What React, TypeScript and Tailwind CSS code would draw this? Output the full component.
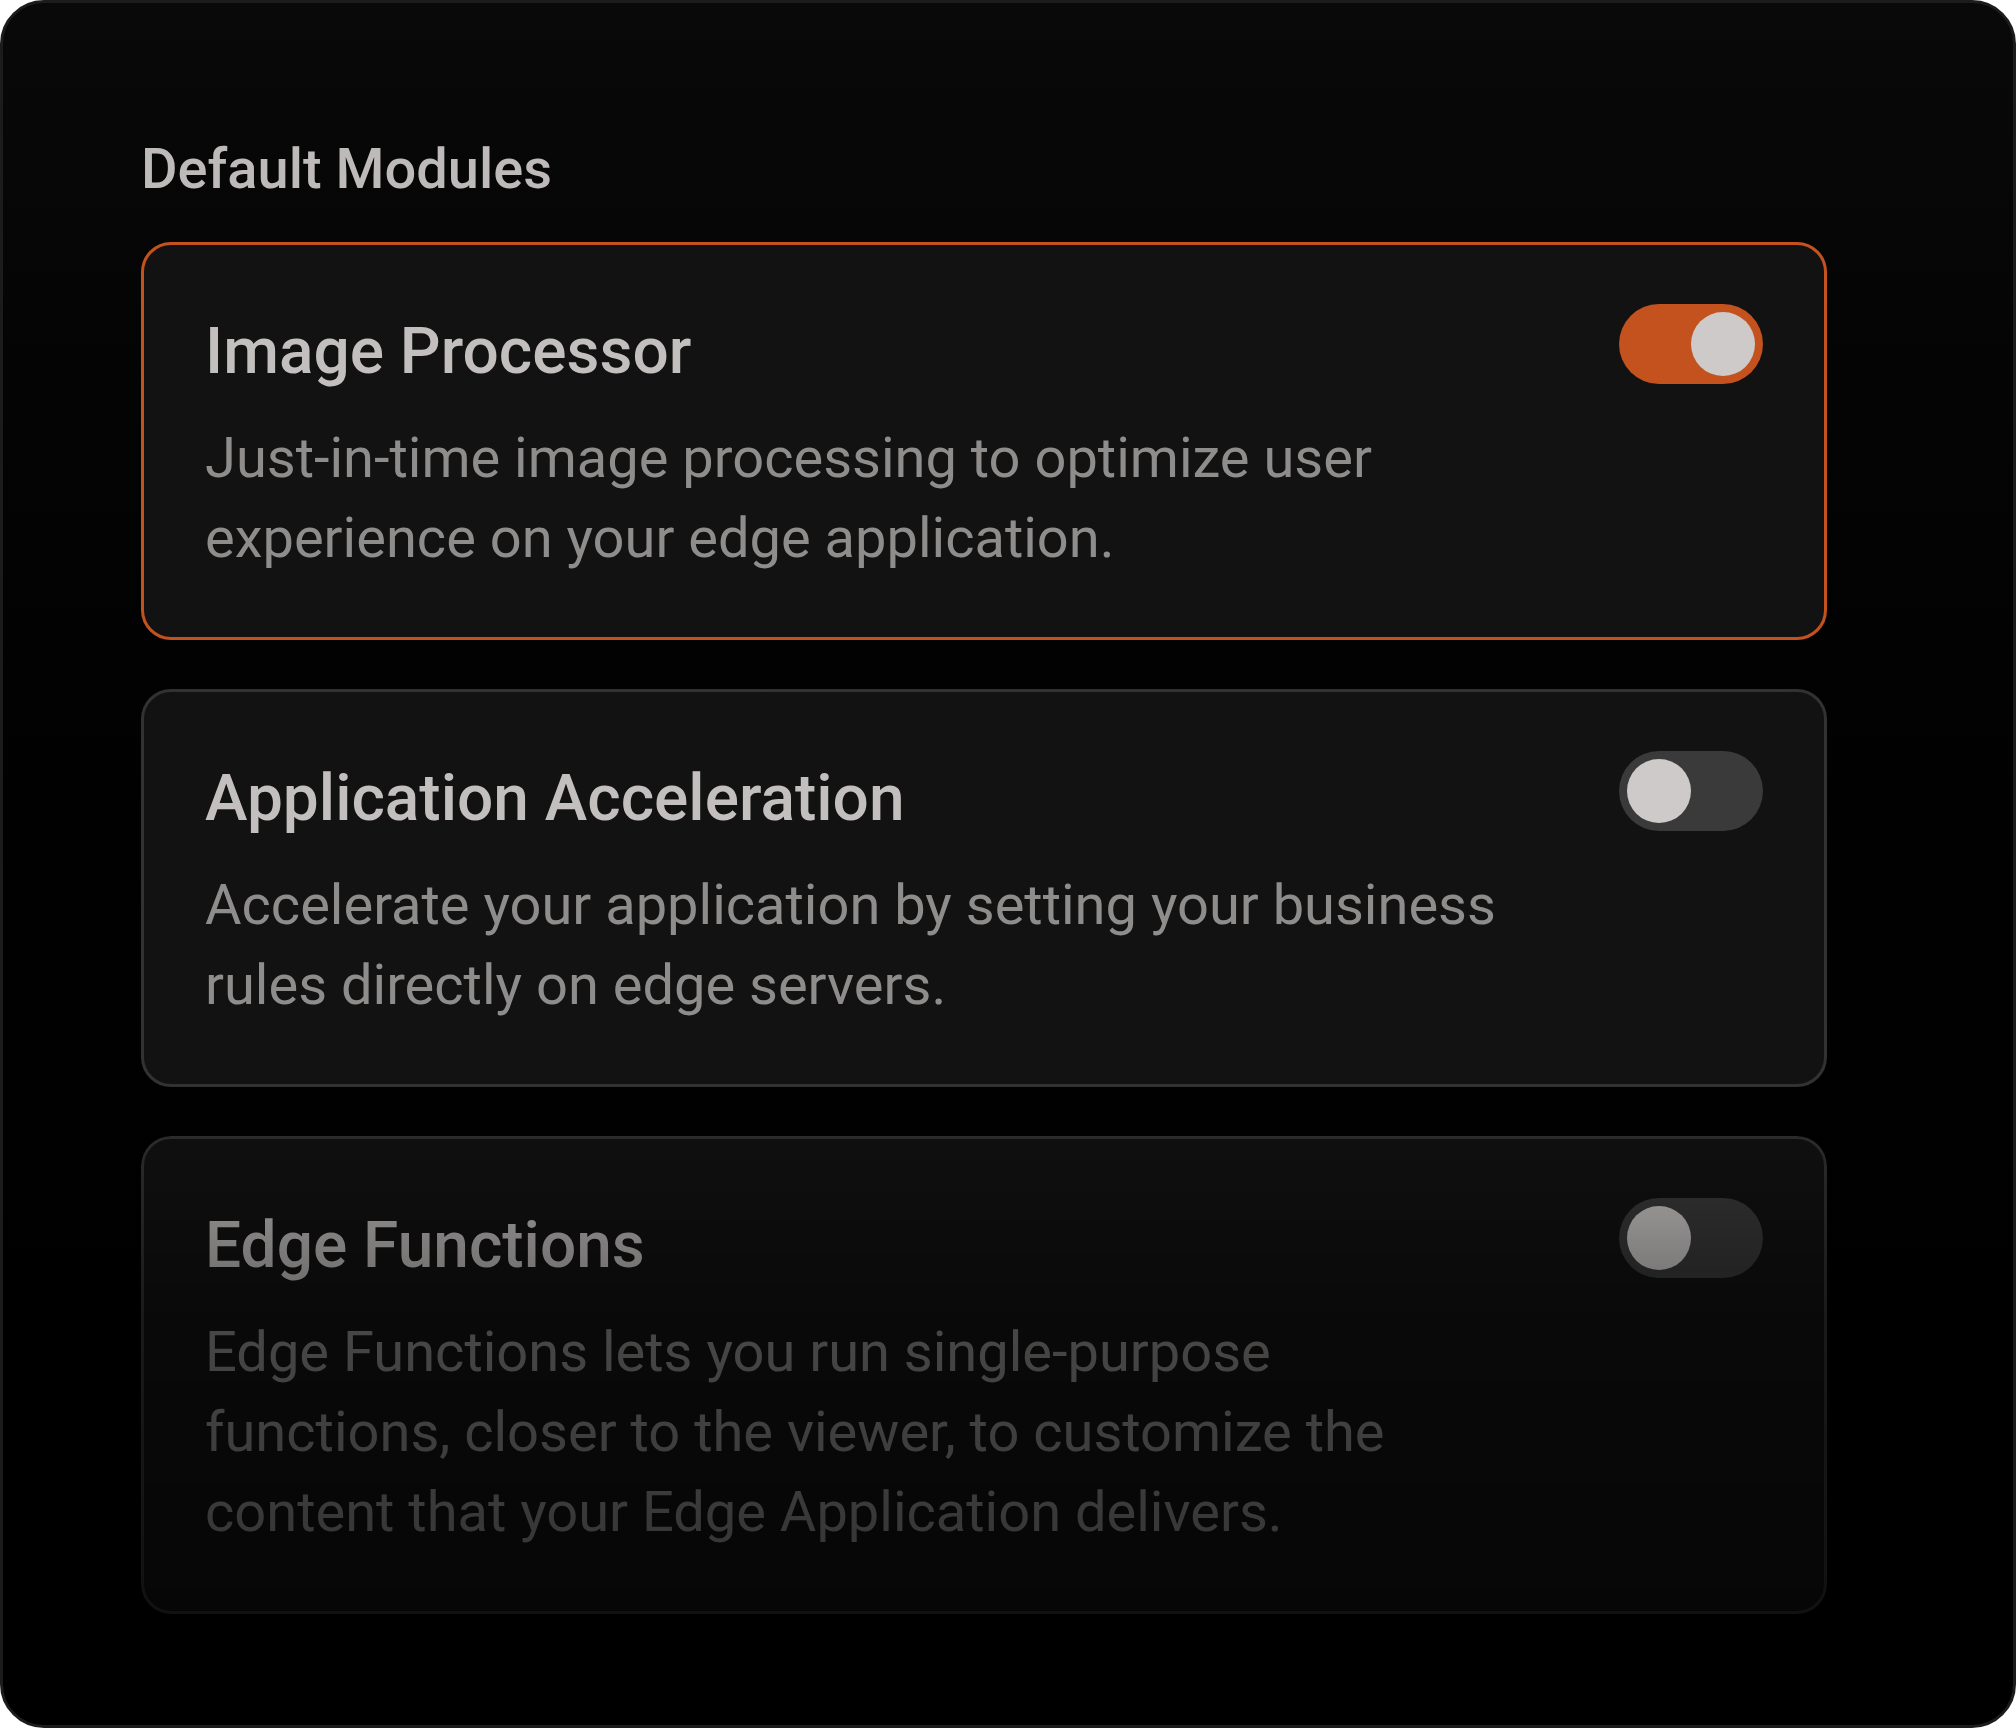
import React from "react";

type Module = {
  title: string;
  description: string;
  enabled: boolean;
  faded?: boolean;
};

const modules: Module[] = [
  {
    title: "Image Processor",
    description: "Just-in-time image processing to optimize user experience on your edge application.",
    enabled: true,
  },
  {
    title: "Application Acceleration",
    description: "Accelerate your application by setting your business rules directly on edge servers.",
    enabled: false,
  },
  {
    title: "Edge Functions",
    description:
      "Edge Functions lets you run single-purpose functions, closer to the viewer, to customize the content that your Edge Application delivers.",
    enabled: false,
    faded: true,
  },
];

function Toggle({ on }: { on: boolean }) {
  return (
    <div
      className={`flex h-[80px] w-[144px] shrink-0 items-center rounded-full p-[8px] ${
        on ? "justify-end bg-[#c4521f]" : "justify-start bg-[#3a3a3a]"
      }`}
    >
      <div className="h-[64px] w-[64px] rounded-full bg-[#cdcac9]" />
    </div>
  );
}

function ModuleCard({ title, description, enabled, faded }: Module) {
  return (
    <div
      className={`flex items-start justify-between rounded-[30px] border-[3px] bg-[#121212] px-[61px] py-[59px] ${
        enabled ? "border-[#c4521f]" : "border-[#323232]"
      } ${
        faded
          ? "[mask-image:linear-gradient(to_bottom,rgba(0,0,0,0.85),rgba(0,0,0,0.5)_40%,rgba(0,0,0,0.35))]"
          : ""
      }`}
    >
      <div className="max-w-[1305px] flex-1">
        <h3 className="text-[64px] font-medium leading-[96px] text-[#c2bfbe]">{title}</h3>
        <p className="mt-[18px] text-[56px] leading-[80px] text-[#8f8d8c]">{description}</p>
      </div>
      <Toggle on={enabled} />
    </div>
  );
}

export default function App() {
  return (
    <div
      className="h-[1728px] w-full rounded-[44px] border-[3px] border-[#1c1c1c] bg-linear-to-b from-[#090909] to-[#000000] pl-[138px] pr-[186px] pt-[126px]"
      style={{ fontFamily: "Roboto, 'Noto Sans', sans-serif" }}
    >
      <h2 className="text-[56px] font-medium leading-[80px] text-[#bdbab9]">Default Modules</h2>
      <div className="mt-[33px] flex flex-col gap-[49px]">
        {modules.map((m) => (
          <ModuleCard key={m.title} {...m} />
        ))}
      </div>
    </div>
  );
}
